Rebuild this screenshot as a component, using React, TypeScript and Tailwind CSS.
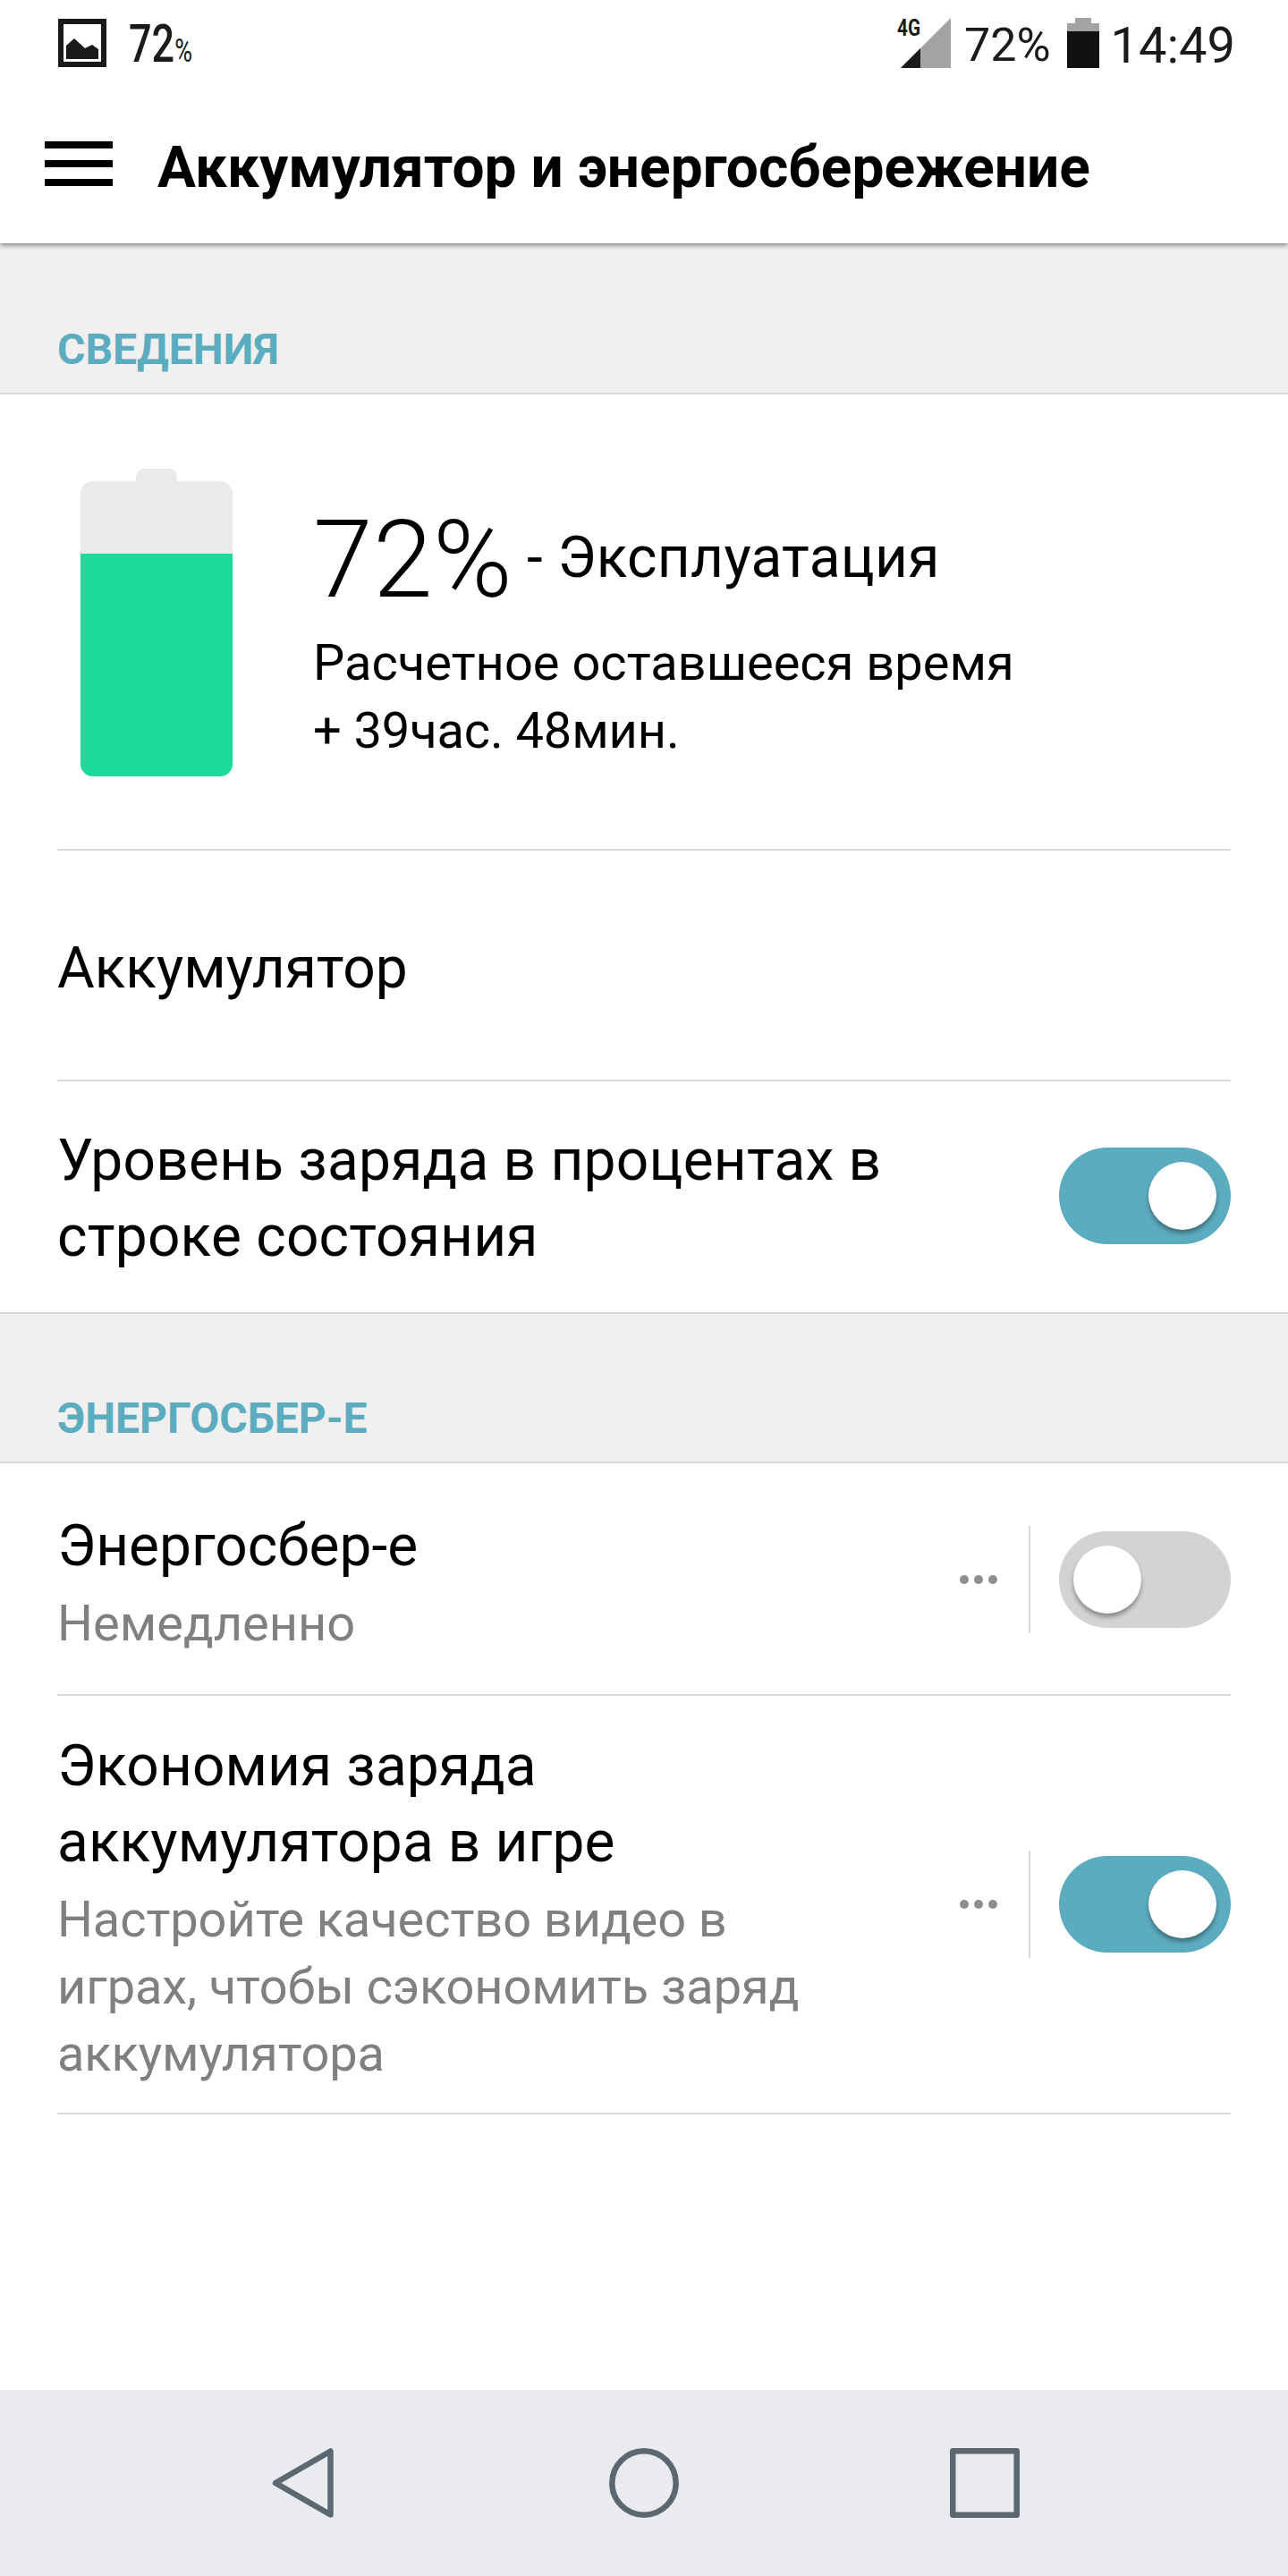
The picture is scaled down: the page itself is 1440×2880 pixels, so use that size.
import React from "react";

const Toggle = ({ on }: { on: boolean }) => (
  <div
    className={`flex h-[108px] w-[192px] shrink-0 items-center rounded-full px-4 ${
      on ? "justify-end bg-[#5cacbf]" : "justify-start bg-[#d3d3d3]"
    }`}
  >
    <div className="h-[76px] w-[76px] rounded-full bg-white shadow-[0_4px_5px_rgba(0,0,0,0.35)]" />
  </div>
);

const Dots = () => (
  <svg className="h-[10px] w-[42px]" viewBox="0 0 42 10" fill="#8e8e8e">
    <circle cx="5" cy="5" r="5" />
    <circle cx="21" cy="5" r="5" />
    <circle cx="37" cy="5" r="5" />
  </svg>
);

const MoreToggle = ({ on }: { on: boolean }) => (
  <div className="flex shrink-0 items-center">
    <Dots />
    <div className="mr-8 ml-[35px] h-[120px] w-[2px] bg-[#d9d9d9]" />
    <Toggle on={on} />
  </div>
);

const SectionTitle = ({ title }: { title: string }) => (
  <div className="px-16 pb-5 text-[48px] leading-[56px] font-bold text-[#5cacbf]">{title}</div>
);

const Line = () => <div className="h-[2px] shrink-0 bg-[#d9d9d9]" />;

const StatusBar = () => (
  <div className="z-20 flex h-[100px] items-start justify-between bg-white pr-[59px] pl-[65px] text-[#1a1a1a]">
    <div className="flex">
      <svg className="mt-[21px] h-[54px] w-[54px]" viewBox="0 0 54 54" fill="#1a1a1a">
        <path d="M0 0H54V54H0ZM6 6V48H48V6Z" fillRule="evenodd" />
        <path d="M9 45V30L18 22L30 33L38 29L45 34V45Z" />
      </svg>
      <div className="mt-[14px] ml-[25px] flex origin-left scale-x-75 items-baseline leading-[70px]">
        <span className="text-[60px] font-medium">72</span>
        <span className="text-[36px]">%</span>
      </div>
    </div>
    <div className="flex">
      <svg className="mt-[20px] h-[56px] w-[60px] overflow-visible" viewBox="0 0 60 56">
        <path d="M60 0V56H4Z" fill="#a3a3a3" />
        <path d="M26 34V56H4Z" fill="#1a1a1a" />
        <text x="0" y="19.5" fontSize="25" fontWeight="700" textLength="26" lengthAdjust="spacingAndGlyphs" fill="#1a1a1a">
          4G
        </text>
      </svg>
      <span className="mt-[20px] ml-[15px] text-[52px] leading-[62px]">72%</span>
      <svg className="mt-[20px] ml-[18px] h-[56px] w-[36px]" viewBox="0 0 36 56">
        <path d="M9 0H27V6H36V15H0V6H9Z" fill="#a3a3a3" />
        <path d="M0 15H36V56H0Z" fill="#111" />
      </svg>
      <span className="mt-[18px] ml-[13px] text-[56px] leading-[66px]">14:49</span>
    </div>
  </div>
);

const BatteryInfo = () => (
  <div className="flex h-[508px] items-start pt-[83px] pl-[26px]">
    <div className="flex flex-col items-center">
      <div className="h-[14px] w-[46px] rounded-t-[9px] bg-[#eaeaea]" />
      <div className="flex h-[330px] w-[170px] items-end overflow-hidden rounded-[14px] bg-[#eaeaea]">
        <div className="h-[249px] w-full bg-[#1adc98]" />
      </div>
    </div>
    <div className="mt-8 ml-[90px]">
      <div className="flex h-[140px] items-start">
        <span className="text-[120px] leading-[140px] font-light tracking-[0.4px]">72%</span>
        <span className="mt-[30px] ml-4 text-[64px] leading-[75px] tracking-[0.3px]">- Эксплуатация</span>
      </div>
      <p className="mt-[7px] text-[56px] leading-[76px]">Расчетное оставшееся время</p>
      <p className="text-[56px] leading-[76px] tracking-[-0.12px]">+ 39час. 48мин.</p>
    </div>
  </div>
);

const NavBar = () => (
  <nav className="mt-auto flex h-[208px] items-center justify-center gap-[303px] bg-[#e9ebee]">
    <svg className="h-[78px] w-[78px]" viewBox="0 0 78 78" fill="none" stroke="#5b6871" strokeWidth="6.5" strokeLinejoin="round">
      <path d="M69.500 3.500V74.500L8 39Z" />
    </svg>
    <svg className="h-[78px] w-[78px]" viewBox="0 0 78 78" fill="none" stroke="#5b6871" strokeWidth="6.5">
      <circle cx="39" cy="39" r="35.700" />
    </svg>
    <svg className="h-[78px] w-[78px]" viewBox="0 0 78 78" fill="none" stroke="#5b6871" strokeWidth="6.5" strokeLinejoin="round">
      <rect x="3.250" y="3.250" width="71.500" height="71.500" />
    </svg>
  </nav>
);

const App = () => {
  return (
    <div className="flex h-[2880px] w-[1440px] flex-col bg-white font-['Roboto',sans-serif] text-black">
      <StatusBar />
      <header className="z-10 flex h-[172px] items-start bg-white px-[50px] shadow-[0_2px_6px_rgba(0,0,0,0.5)]">
        <div className="mt-[58px] mr-[50px] flex w-[76px] flex-col gap-[13px]">
          <div className="h-2 bg-black" />
          <div className="h-2 bg-black" />
          <div className="h-2 bg-black" />
        </div>
        <h1 className="mt-[50px] text-[64px] leading-[75px] font-bold">Аккумулятор и энергосбережение</h1>
      </header>
      <div className="flex h-[167px] items-end bg-[#f0f0f0]">
        <SectionTitle title="СВЕДЕНИЯ" />
      </div>
      <Line />
      <div className="flex flex-col px-16">
        <BatteryInfo />
        <Line />
        <p className="h-[256px] pt-[94px] text-[64px] leading-[75px]">Аккумулятор</p>
        <Line />
        <div className="flex h-[258px] items-start justify-between">
          <p className="mt-[46px] text-[64px] leading-[85px] tracking-[0.22px]">
            Уровень заряда в процентах в<br />
            строке состояния
          </p>
          <div className="mt-[74px]">
            <Toggle on />
          </div>
        </div>
      </div>
      <Line />
      <div className="flex h-[165px] items-end bg-[#f0f0f0]">
        <SectionTitle title="ЭНЕРГОСБЕР-Е" />
      </div>
      <Line />
      <div className="flex flex-col px-16">
        <div className="flex h-[258px] items-start justify-between">
          <div className="mt-[50px]">
            <p className="text-[64px] leading-[85px]">Энергосбер-е</p>
            <p className="mt-[7px] text-[56px] leading-[75px] text-[#808080]">Немедленно</p>
          </div>
          <div className="mt-[70px]">
            <MoreToggle on={false} />
          </div>
        </div>
        <Line />
        <div className="flex h-[466px] items-start justify-between">
          <div className="mt-9">
            <p className="text-[64px] leading-[85px] tracking-[0.1px]">
              Экономия заряда
              <br />
              аккумулятора в игре
            </p>
            <p className="mt-[7px] text-[56px] leading-[75px] tracking-[-0.1px] text-[#808080]">
              Настройте качество видео в<br />
              играх, чтобы сэкономить заряд
              <br />
              аккумулятора
            </p>
          </div>
          <div className="mt-[173px]">
            <MoreToggle on />
          </div>
        </div>
        <Line />
      </div>
      <NavBar />
    </div>
  );
};

export default App;
